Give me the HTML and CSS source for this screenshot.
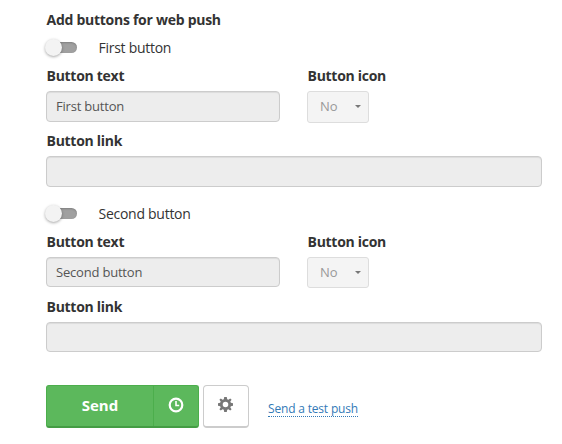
FILE: index.html
```html
<!DOCTYPE html>
<html lang="en">
<head>
<meta charset="utf-8">
<title>Web push buttons</title>
<link rel="stylesheet" href="styles.css">
</head>
<body>
<form class="form">
  <h2 class="title">Add buttons for web push</h2>
  <section class="group">
    <div class="toggle-row"><span class="switch"><span class="knob"></span></span><span>First button</span></div>
    <div class="columns">
      <div class="field"><div class="label">Button text</div><div class="input">First button</div></div>
      <div class="field"><div class="label">Button icon</div><div class="select">No<span class="caret"></span></div></div>
    </div>
    <div class="field"><div class="label">Button link</div><div class="input"></div></div>
  </section>
  <section class="group second">
    <div class="toggle-row"><span class="switch"><span class="knob"></span></span><span>Second button</span></div>
    <div class="columns">
      <div class="field"><div class="label">Button text</div><div class="input">Second button</div></div>
      <div class="field"><div class="label">Button icon</div><div class="select">No<span class="caret"></span></div></div>
    </div>
    <div class="field"><div class="label">Button link</div><div class="input"></div></div>
  </section>
  <div class="actions">
    <div class="send-group">
      <div class="send">Send</div>
      <div class="clock"><svg width="16" height="16" viewBox="0 0 16 16" fill="none" stroke="#fff"><circle cx="8" cy="8" r="6.3" stroke-width="2.2"/><path d="M8 4v4.5h3.2" stroke-width="1.6"/></svg></div>
    </div>
    <div class="gear"><svg width="15" height="15" viewBox="-7 -7 14 14" fill="#777"><path fill-rule="evenodd" d="M-1.2-7h2.4l.4 2 1.1.5 1.7-1.2 1.3 1.3-1.2 1.7.5 1.1 2 .4v2.4l-2 .4-.5 1.1 1.2 1.7-1.3 1.3-1.7-1.2-1.1.5-.4 2h-2.4l-.4-2-1.1-.5-1.7 1.2-1.3-1.3 1.2-1.7-.5-1.1-2-.4v-2.4l2-.4.5-1.1-1.2-1.7 1.3-1.3 1.7 1.2 1.1-.5zM0-2.6a2.6 2.6 0 1 0 0 5.2a2.6 2.6 0 1 0 0-5.2z"/></svg></div>
    <a class="test">Send a test push</a>
  </div>
</form>
</body>
</html>
```
FILE: styles.css
```css
* { box-sizing: border-box; }
body {
  margin: 0;
  background: #fff;
  color: #333;
  font: 14px/20px "Open Sans", "Noto Sans", sans-serif;
}
.form { padding: 10px 20px 0 46px; }
.title {
  margin: 0 0 8px;
  padding-left: .5px;
  font-size: 14px;
  line-height: 20px;
  font-weight: 700;
  letter-spacing: -.27px;
}
.group { height: 166px; }
.toggle-row {
  display: flex;
  align-items: center;
  height: 20px;
  margin-bottom: 8px;
  letter-spacing: -.27px;
}
.switch {
  display: flex;
  align-items: center;
  width: 31px;
  height: 11px;
  margin: 0 21.5px 1px 0;
  border-radius: 6px;
  background: #a0a0a0;
  box-shadow: inset 0 1px 2px rgba(0, 0, 0, .2);
}
.knob {
  flex: none;
  width: 17px;
  height: 17px;
  margin-left: -1px;
  border-radius: 50%;
  background: #f3f3f3;
  box-shadow: 0 1px 3px rgba(0, 0, 0, .35);
}
.columns { display: grid; grid-template-columns: 234px 62px; column-gap: 27px; height: 65px; }
.label {
  height: 25px;
  padding-left: .5px;
  font-weight: 700;
  letter-spacing: -.28px;
  white-space: nowrap;
}
.input {
  height: 31px;
  padding: 0 9px;
  border: 1px solid #ccc;
  border-radius: 4px;
  background: #ededed;
  box-shadow: inset 0 1px 1px rgba(0, 0, 0, .075);
  color: #555;
  font-size: 13px;
  line-height: 29px;
  letter-spacing: -.2px;
}
.second .input { height: 30px; }
.select {
  display: flex;
  align-items: center;
  justify-content: space-between;
  height: 32px;
  padding: 0 7px 2px 12px;
  border: 1px solid #ddd;
  border-radius: 3px;
  background: #f4f4f4;
  color: #999;
  font-size: 13px;
}
.second .select { height: 31px; }
.caret { margin-top: 1px; border: 3px solid transparent; border-top-color: #777; border-bottom: 0; }
.actions { display: flex; align-items: center; height: 43px; margin-top: 15px; }
.send-group {
  display: flex;
  width: 153px;
  height: 43px;
  border: 1px solid #4cae4c;
  border-bottom: 2px solid #449d44;
  border-radius: 3px;
  background: #5cb85c;
  color: #fff;
}
.send { width: 106px; font-size: 15px; font-weight: 700; line-height: 39px; text-align: center; }
.clock {
  flex: 1;
  display: flex;
  align-items: center;
  justify-content: center;
  padding-bottom: 2px;
  border-left: 1px solid #4cae4c;
}
.gear {
  display: flex;
  align-items: center;
  justify-content: center;
  width: 46px;
  height: 43px;
  margin: 0 19px 0 4px;
  padding: 0 1px 3px 0;
  border: 1px solid #ccc;
  border-bottom-width: 2px;
  border-radius: 4px;
}
.test {
  margin-top: 4px;
  border-bottom: 1px dotted #337ab7;
  color: #337ab7;
  font-size: 12px;
  line-height: 15px;
  letter-spacing: -.18px;
}
```
